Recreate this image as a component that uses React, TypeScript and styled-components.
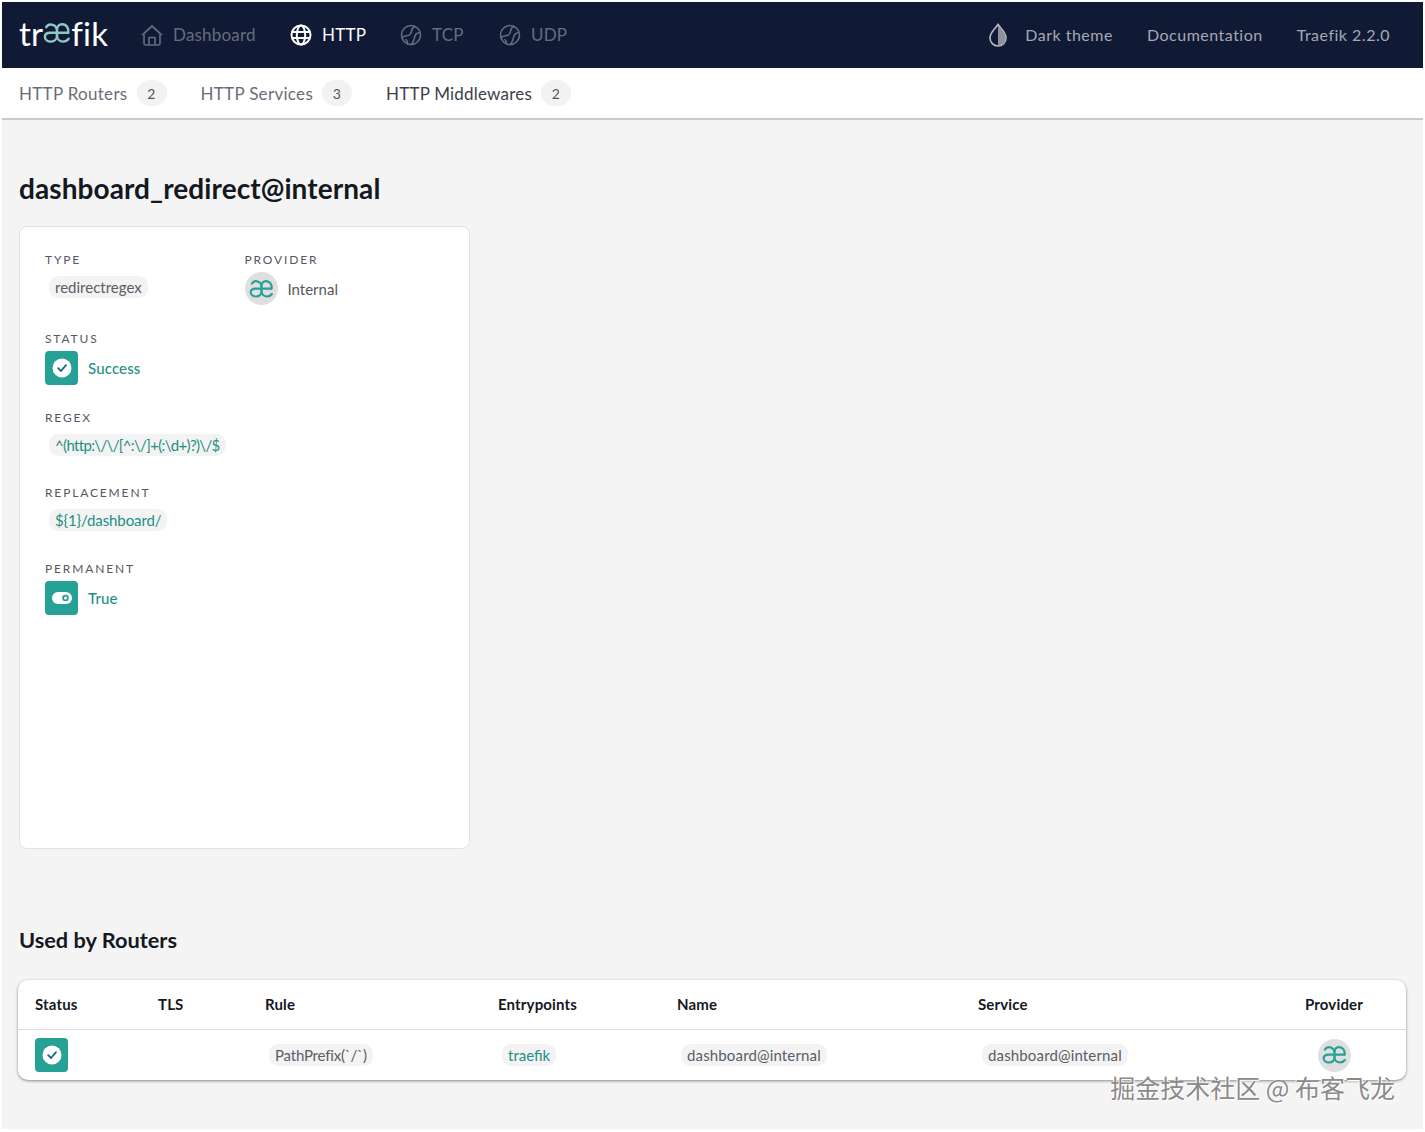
import React from 'react';
import styled, { createGlobalStyle } from 'styled-components';

const GlobalStyle = createGlobalStyle`
	html, body {
		margin: 0;
		padding: 0;
		background: #fff;
	}
	body {
		font-family: 'Lato', 'Noto Sans', sans-serif;
		color: #2b2f3a;
	}
`;

const teal = '#25a195';

const AeMark = ({ size = 24, stroke = teal }: { size?: number; stroke?: string }) => (
	<svg width={size} height={size * 0.8} viewBox='0 0 30 24' fill='none' stroke={stroke} strokeWidth='2.6' strokeLinecap='round'>
		<path d='M3.5 5.5C5 2.8 8 2.2 10.5 3c3 1 4.5 3.5 4.5 6.5v5c0 3.500 -2.500 6.500 -6.500 6.500C5 21 2 19 2 16c0 -3 2.500 -4.500 6 -4.500h19' />
		<path d='M27 11.500C28 6.500 25 2.500 20.500 2.500c-3 0 -5.500 2 -5.500 6M15 14.500c0 4 3 6.500 6.500 6.500 2.500 0 4.500 -1 6 -3' />
	</svg>
);

const HomeIcon = () => (
	<svg width='22' height='24' viewBox='0 0 22 24' fill='none' stroke='currentColor' strokeWidth='1.6' strokeLinejoin='round'>
		<path d='M3 10.500 11 3l8 7.500V20a2 2 0 0 1 -2 2H5a2 2 0 0 1 -2 -2z' />
		<path d='M8 22v-7.500h6V22' />
		<path d='M1 12 11 3l10 9' />
	</svg>
);

const GlobeIcon = () => (
	<svg width='22' height='22' viewBox='0 0 22 22' fill='none' stroke='currentColor' strokeWidth='2'>
		<circle cx='11' cy='11' r='9.500' />
		<ellipse cx='11' cy='11' rx='4.200' ry='9.500' />
		<path d='M2 8h18M2 14h18' />
	</svg>
);

const BallIcon = () => (
	<svg width='22' height='22' viewBox='0 0 22 22' fill='none' stroke='currentColor' strokeWidth='1.600' strokeLinecap='round'>
		<circle cx='11' cy='11' r='9.500' />
		<path d='M14.500 2.500C10 5 13 8 10 10.500c-2.500 2 -5.500 .5 -7.500 3' />
		<path d='M19.500 8.500c-3 .5 -4.500 2 -5 5-.4 3 -1.500 4.500 -3 7' />
		<path d='M6 15.500c1 1 1.500 2 1.500 4' />
	</svg>
);

const DropIcon = () => (
	<svg width='20' height='24' viewBox='0 0 20 24' fill='none'>
		<path d='M10 1.500C7 6 2 9.500 2 15a8 8 0 0 0 16 0C18 9.500 13 6 10 1.500z' stroke='#b9bbc3' strokeWidth='1.600' />
		<path d='M10 2.500C13 6.500 17.500 10 17.500 15a7.500 7.500 0 0 1 -7.500 7.500z' fill='#8f919b' />
	</svg>
);

const CheckBadge = () => (
	<svg width='20' height='20' viewBox='0 0 20 20'>
		<circle cx='10' cy='10' r='9.500' fill='#fff' />
		<path d='M6.200 10.200 9 13l5 -5.800' fill='none' stroke='#1d6f78' strokeWidth='1.900' strokeLinecap='round' strokeLinejoin='round' />
	</svg>
);

const ToggleBadge = () => (
	<svg width='20' height='12' viewBox='0 0 20 12'>
		<rect width='20' height='12' rx='6' fill='#fff' />
		<circle cx='13.500' cy='6' r='2.400' fill='none' stroke={teal} strokeWidth='1.800' />
	</svg>
);

const Frame = styled.div`
	width: 1421px;
	height: 1127px;
	margin: 2px 0 0 2px;
	display: flex;
	flex-direction: column;
	background: #f4f4f4;
	position: relative;
	overflow: hidden;
`;

const TopBar = styled.header`
	box-sizing: border-box;
	height: 66px;
	flex: none;
	display: flex;
	align-items: center;
	padding: 0 33px 1px 17px;
	background: #111a35;
`;

const Logo = styled.div`
	display: flex;
	align-items: center;
	width: 122px;
	padding-bottom: 3px;
	color: #fff;
	font-size: 33px;
	line-height: 1;
	letter-spacing: 0.2px;
	font-weight: 400;
`;

const NavItem = styled.a<{ $active?: boolean; $width?: number }>`
	display: flex;
	align-items: center;
	gap: 10px;
	width: ${p => (p.$width ? `${p.$width}px` : 'auto')};
	font-size: 17px;
	letter-spacing: 0.2px;
	color: ${p => (p.$active ? '#fff' : '#666c7d')};
`;

const NavRight = styled.div`
	margin-left: auto;
	display: flex;
	align-items: center;
	gap: 34px;
`;

const RightItem = styled.a`
	display: flex;
	align-items: center;
	gap: 17px;
	font-size: 16px;
	letter-spacing: 0.5px;
	color: #a5a8b3;
`;

const SubBar = styled.nav`
	height: 50px;
	flex: none;
	display: flex;
	align-items: center;
	gap: 34px;
	padding: 0 17px;
	background: #fff;
	border-bottom: 2px solid #c9c9c9;
`;

const SubItem = styled.a<{ $active?: boolean }>`
	display: flex;
	align-items: center;
	gap: 9px;
	font-size: 17px;
	letter-spacing: ${p => (p.$active ? 0.2 : 0.3)}px;
	color: ${p => (p.$active ? '#3c404c' : '#6a6d77')};
`;

const Count = styled.span`
	width: 30px;
	height: 26px;
	border-radius: 13px;
	background: #f2f2f2;
	display: flex;
	align-items: center;
	justify-content: center;
	font-size: 14px;
	color: #555;
`;

const Main = styled.main`
	padding: 0 17px;
	flex: 1;
	display: flex;
	flex-direction: column;
	align-items: flex-start;
`;

const PageTitle = styled.h1`
	margin: 51px 0 21px;
	font-size: 28px;
	line-height: 34px;
	letter-spacing: 0.08px;
	font-weight: 700;
	color: #14181f;
`;

const DetailCard = styled.section`
	box-sizing: border-box;
	width: 451px;
	height: 623px;
	padding: 26px 25px;
	background: #fff;
	border: 1px solid #e2e2e2;
	border-radius: 8px;
`;

const FieldRow = styled.div`
	display: flex;
`;

const Field = styled.div<{ $height: number }>`
	width: 200px;
	height: ${p => p.$height}px;
`;

const Label = styled.div`
	font-size: 12px;
	line-height: 14px;
	letter-spacing: 1.85px;
	text-transform: uppercase;
	color: #55585f;
	margin-bottom: 5px;
`;

const Chip = styled.span<{ $teal?: boolean; $spacing?: number }>`
	display: inline-block;
	padding: 0 6px;
	line-height: 22px;
	border-radius: 9px;
	font-size: 15px;
	letter-spacing: ${p => p.$spacing ?? 0}px;
	background: #f3f3f3;
	white-space: nowrap;
	color: ${p => (p.$teal ? '#1f8f84' : '#5a5d66')};
`;

const FieldChip = styled(Chip)`
	margin: 4px 0 0 4px;
`;

const TableChip = styled(Chip)`
	margin-left: 4px;
`;

const IconLine = styled.div`
	display: flex;
	align-items: center;
	gap: 10px;
`;

const StateBox = styled.div`
	width: 33px;
	height: 34px;
	border-radius: 4px;
	background: ${teal};
	display: flex;
	align-items: center;
	justify-content: center;
	flex: none;
`;

const StateText = styled.span`
	font-size: 15px;
	font-weight: 500;
	letter-spacing: 0.15px;
	color: #1f8f84;
`;

const ProviderAvatar = styled.div`
	width: 33px;
	height: 33px;
	border-radius: 50%;
	background: #dfdfdf;
	display: flex;
	align-items: center;
	justify-content: center;
	flex: none;
`;

const ProviderName = styled.span`
	font-size: 15px;
	color: #55585f;
`;

const SectionTitle = styled.h2`
	margin: 77px 0 26px;
	font-size: 21.75px;
	line-height: 28px;
	font-weight: 700;
	color: #14181f;
`;

const Table = styled.div`
	align-self: stretch;
	margin-left: -1px;
	width: 1388px;
	background: #fff;
	border-radius: 10px;
	box-shadow: 0 1px 3px rgba(0, 0, 0, 0.45);
`;

const Row = styled.div<{ $head?: boolean }>`
	display: grid;
	grid-template-columns: 123px 107px 233px 179px 301px 327px 1fr;
	align-items: center;
	box-sizing: border-box;
	height: 50px;
	padding-left: 17px;
	padding-bottom: ${p => (p.$head ? 2 : 0)}px;
	border-bottom: ${p => (p.$head ? '1px solid #dedede' : 'none')};
`;

const HeadCell = styled.div`
	font-size: 15px;
	font-weight: 700;
	letter-spacing: 0.15px;
	color: #14181f;
`;

const Cell = styled.div`
	display: flex;
	align-items: center;
`;

const ProviderCell = styled(Cell)`
	padding-left: 13px;
`;

const Watermark = styled.div`
	position: absolute;
	right: 28px;
	bottom: 27px;
	font-family: 'Noto Sans CJK SC', sans-serif;
	font-size: 25px;
	line-height: 30px;
	color: #8a8a8a;
	text-shadow: 1px 1px 0 #fff, -1px 0 0 #fff;
	white-space: nowrap;
`;

const App = () => (
	<>
		<GlobalStyle />
		<Frame>
			<TopBar>
				<Logo>
					tr
					<AeMark size={28} stroke='#8fc7c4' />
					fik
				</Logo>
				<NavItem $width={149}>
					<HomeIcon />
					Dashboard
				</NavItem>
				<NavItem $active $width={110}>
					<GlobeIcon />
					HTTP
				</NavItem>
				<NavItem $width={99}>
					<BallIcon />
					TCP
				</NavItem>
				<NavItem>
					<BallIcon />
					UDP
				</NavItem>
				<NavRight>
					<RightItem>
						<DropIcon />
						Dark theme
					</RightItem>
					<RightItem>Documentation</RightItem>
					<RightItem>Traefik 2.2.0</RightItem>
				</NavRight>
			</TopBar>

			<SubBar>
				<SubItem>
					HTTP Routers <Count>2</Count>
				</SubItem>
				<SubItem>
					HTTP Services <Count>3</Count>
				</SubItem>
				<SubItem $active>
					HTTP Middlewares <Count>2</Count>
				</SubItem>
			</SubBar>

			<Main>
				<PageTitle>dashboard_redirect@internal</PageTitle>
				<DetailCard>
					<FieldRow>
						<Field $height={79}>
							<Label>Type</Label>
							<FieldChip>redirectregex</FieldChip>
						</Field>
						<Field $height={79}>
							<Label>Provider</Label>
							<IconLine>
								<ProviderAvatar>
									<AeMark size={25} />
								</ProviderAvatar>
								<ProviderName>Internal</ProviderName>
							</IconLine>
						</Field>
					</FieldRow>
					<Field $height={79}>
						<Label>Status</Label>
						<IconLine>
							<StateBox>
								<CheckBadge />
							</StateBox>
							<StateText>Success</StateText>
						</IconLine>
					</Field>
					<Field $height={75}>
						<Label>Regex</Label>
						<FieldChip $teal $spacing={-0.65}>
							{'^(http:\\/\\/[^:\\/]+(:\\d+)?)\\/$'}
						</FieldChip>
					</Field>
					<Field $height={76}>
						<Label>Replacement</Label>
						<FieldChip $teal $spacing={-0.1}>
							{'${1}/dashboard/'}
						</FieldChip>
					</Field>
					<Field $height={60}>
						<Label>Permanent</Label>
						<IconLine>
							<StateBox>
								<ToggleBadge />
							</StateBox>
							<StateText>True</StateText>
						</IconLine>
					</Field>
				</DetailCard>

				<SectionTitle>Used by Routers</SectionTitle>
				<Table>
					<Row $head>
						<HeadCell>Status</HeadCell>
						<HeadCell>TLS</HeadCell>
						<HeadCell>Rule</HeadCell>
						<HeadCell>Entrypoints</HeadCell>
						<HeadCell>Name</HeadCell>
						<HeadCell>Service</HeadCell>
						<HeadCell>Provider</HeadCell>
					</Row>
					<Row>
						<Cell>
							<StateBox>
								<CheckBadge />
							</StateBox>
						</Cell>
						<Cell />
						<Cell>
							<TableChip $spacing={-0.2}>PathPrefix(`/`)</TableChip>
						</Cell>
						<Cell>
							<TableChip $teal>traefik</TableChip>
						</Cell>
						<Cell>
							<TableChip $spacing={0.15}>dashboard@internal</TableChip>
						</Cell>
						<Cell>
							<TableChip $spacing={0.15}>dashboard@internal</TableChip>
						</Cell>
						<ProviderCell>
							<ProviderAvatar>
								<AeMark size={25} />
							</ProviderAvatar>
						</ProviderCell>
					</Row>
				</Table>
			</Main>
			<Watermark>掘金技术社区 @ 布客飞龙</Watermark>
		</Frame>
	</>
);

export default App;
